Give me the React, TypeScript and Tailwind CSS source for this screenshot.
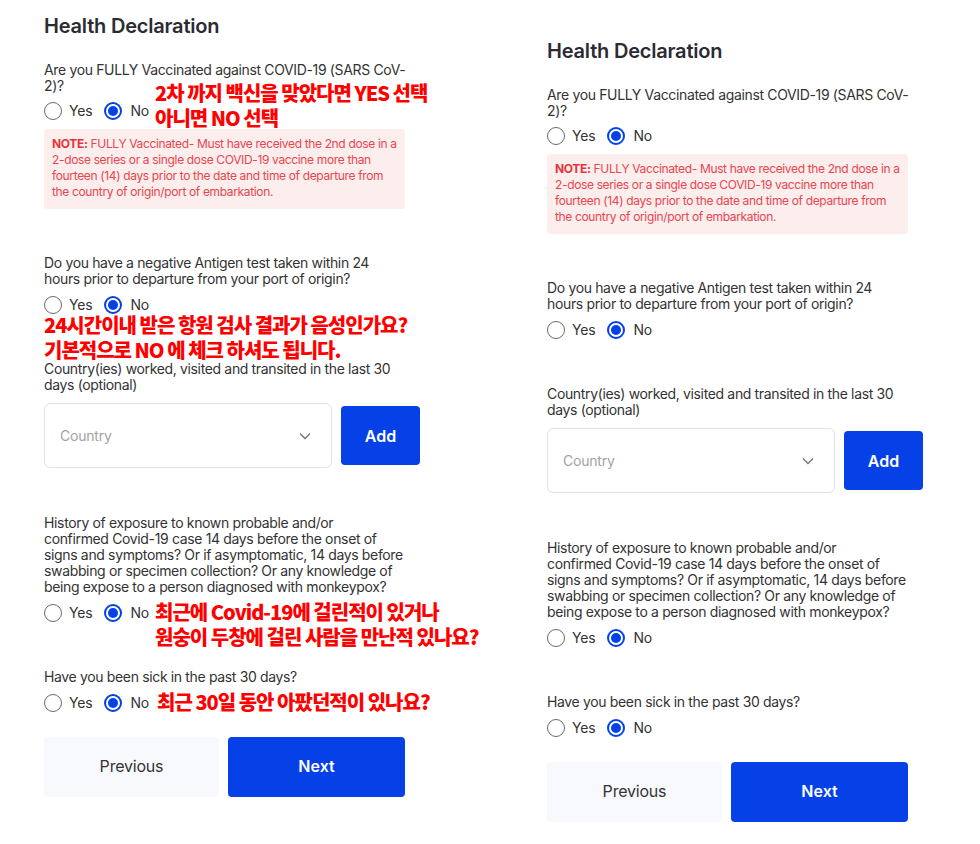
import React from "react";

const BODY = { fontFamily: 'Inter, "Liberation Sans", Arial, sans-serif' };
const HEAD = { fontFamily: 'Inter, "Liberation Sans", sans-serif' };
const KR = { fontFamily: '"Noto Sans CJK KR", "Noto Sans", sans-serif' };

function Lines({ lines, className }: { lines: string[]; className?: string }) {
  return (
    <p className={"text-[14px] leading-4 tracking-[-0.35px] " + (className || "")}>
      {lines.map((l, i) => (
        <span key={i} className="block whitespace-nowrap">
          {l}
        </span>
      ))}
    </p>
  );
}

function Radio({ checked }: { checked: boolean }) {
  return checked ? (
    <span className="box-border flex h-[18px] w-[18px] shrink-0 items-center justify-center rounded-full border-2 border-[#0541e6] bg-white">
      <span className="h-[10px] w-[10px] rounded-full bg-[#0541e6]" />
    </span>
  ) : (
    <span className="box-border h-[18px] w-[18px] shrink-0 rounded-full border border-[#6a6a6a] bg-white" />
  );
}

function RadioRow({ note, first }: { note?: React.ReactNode; first?: boolean }) {
  return (
    <div
      className={
        "relative flex h-[18px] items-center text-[14px] leading-4 tracking-[-0.2px] text-[#333] " +
        (first ? "mt-[8px]" : "mt-[9px]")
      }
    >
      <Radio checked={false} />
      <span className="ml-[7px] mr-[12px]">Yes</span>
      <Radio checked={true} />
      <span className="ml-[8px]">No</span>
      {note}
    </div>
  );
}

function Ann({ children, className }: { children: React.ReactNode; className: string }) {
  return (
    <div
      style={KR}
      className={
        "absolute whitespace-nowrap text-[20px] font-black leading-[25px] tracking-[-1px] text-[#ff0000] " +
        className
      }
    >
      {children}
    </div>
  );
}

function Form({ annotate }: { annotate: boolean }) {
  return (
    <div style={BODY} className="w-[376px] text-[#333]">
      <h2 style={HEAD} className="h-[28px] text-[20px] font-semibold leading-[30px] tracking-[-0.2px] text-[#2b2b33]">
        Health Declaration
      </h2>

      <div className="mt-[23px] w-[361px]">
        <Lines lines={["Are you FULLY Vaccinated against COVID-19 (SARS CoV-", "2)?"]} />
        <RadioRow
          first
          note={
            annotate ? (
              <Ann className="left-[111px] top-[-22px]">
                2차 까지 백신을 맞았다면 YES 선택
                <br />
                아니면 NO 선택
              </Ann>
            ) : null
          }
        />
        <div className="mt-[9px] h-[80px] rounded-[4px] bg-[#fdeeee] px-2 pt-[7px] text-[12px] leading-4 tracking-[-0.35px] text-[#e8454d]">
          <span className="block whitespace-nowrap">
            <span className="font-bold text-[#e3343b]">NOTE:</span> FULLY Vaccinated- Must have received the 2nd dose in a
          </span>
          <span className="block whitespace-nowrap">2-dose series or a single dose COVID-19 vaccine more than</span>
          <span className="block whitespace-nowrap">fourteen (14) days prior to the date and time of departure from</span>
          <span className="block whitespace-nowrap">the country of origin/port of embarkation.</span>
        </div>
      </div>

      <div className="mt-[46px] w-[361px]">
        <Lines
          lines={[
            "Do you have a negative Antigen test taken within 24",
            "hours prior to departure from your port of origin?",
          ]}
        />
        <RadioRow
          note={
            annotate ? (
              <Ann className="left-0 top-[16px]">
                24시간이내 받은 항원 검사 결과가 음성인가요?
                <br />
                기본적으로 NO 에 체크 하셔도 됩니다.
              </Ann>
            ) : null
          }
        />
      </div>

      <div className="mt-[47px]">
        <Lines
          lines={["Country(ies) worked, visited and transited in the last 30", "days (optional)"]}
        />
        <div className="mt-[10px] flex items-center gap-[9px]">
          <div className="flex h-[65px] w-[288px] items-center justify-between rounded-[6px] border border-[#e1e1e4] bg-white pl-[15px] pr-[20px]">
            <span className="text-[14px] tracking-[-0.2px] text-[#a3a3a3]">Country</span>
            <svg width="12" height="8" viewBox="0 0 12 8" fill="none">
              <path d="M1 1.5l5 5 5-5" stroke="#707070" strokeWidth="1.3" />
            </svg>
          </div>
          <button className="h-[59px] w-[79px] rounded-[4px] bg-[#0541e6] text-[16px] font-semibold text-white">
            Add
          </button>
        </div>
      </div>

      <div className="mt-[47px] w-[361px]">
        <Lines
          lines={[
            "History of exposure to known probable and/or",
            "confirmed Covid-19 case 14 days before the onset of",
            "signs and symptoms? Or if asymptomatic, 14 days before",
            "swabbing or specimen collection? Or any knowledge of",
            "being expose to a person diagnosed with monkeypox?",
          ]}
        />
        <RadioRow
          note={
            annotate ? (
              <Ann className="left-[111px] top-[-5px]">
                최근에 Covid-19에 걸린적이 있거나
                <br />
                원숭이 두창에 걸린 사람을 만난적 있나요?
              </Ann>
            ) : null
          }
        />
      </div>

      <div className="mt-[47px] w-[361px]">
        <Lines lines={["Have you been sick in the past 30 days?"]} />
        <RadioRow
          note={
            annotate ? (
              <Ann className="left-[113px] top-[-5px]">최근 30일 동안 아팠던적이 있나요?</Ann>
            ) : null
          }
        />
      </div>

      <div className="mt-[25px] flex w-[361px] gap-[9px]">
        <button className="h-[60px] w-[175px] rounded-[4px] bg-[#f8f9fc] pb-[3px] text-[16px] tracking-[-0.2px] text-[#333]">
          Previous
        </button>
        <button className="h-[60px] w-[177px] rounded-[4px] bg-[#0541e6] pb-[3px] text-[16px] font-semibold text-white">
          Next
        </button>
      </div>
    </div>
  );
}

export default function App() {
  return (
    <div className="flex h-[844px] w-[980px] overflow-hidden bg-white">
      <div className="ml-[44px] mt-[11px]">
        <Form annotate={true} />
      </div>
      <div className="ml-[127px] mt-[36px]">
        <Form annotate={false} />
      </div>
    </div>
  );
}
